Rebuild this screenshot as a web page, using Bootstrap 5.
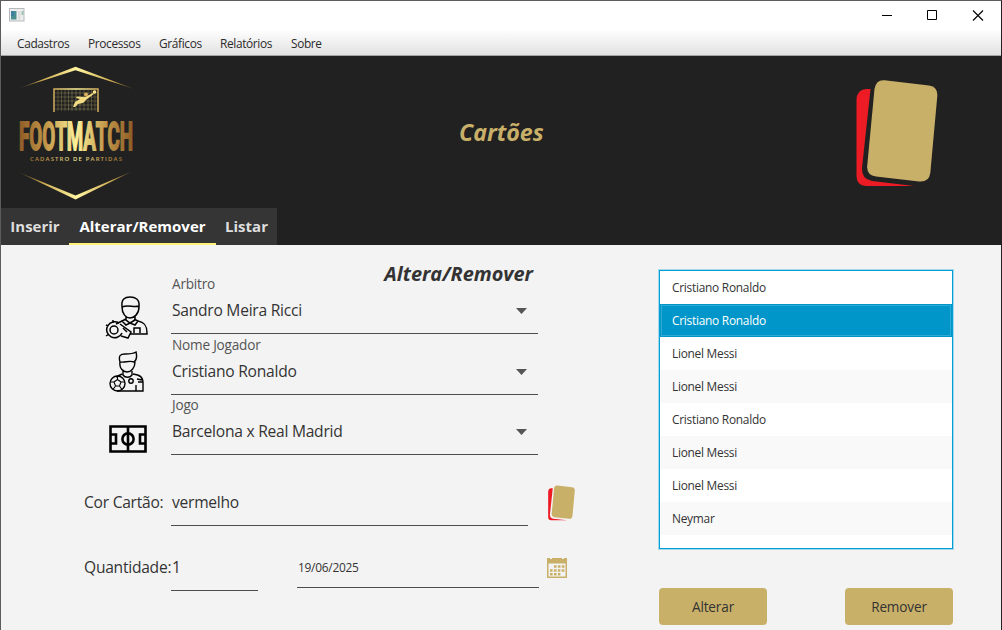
<!DOCTYPE html>
<html lang="pt-BR">
<head>
<meta charset="utf-8">
<title>Cartões</title>
<link href="https://cdn.jsdelivr.net/npm/bootstrap@5.3.0/dist/css/bootstrap.min.css" rel="stylesheet">
<style>
body{font-family:"Open Sans","Noto Sans",sans-serif;color:#333;background:#f3f3f3;overflow:hidden}
.app{width:1002px;height:630px;border:1px solid #5c5c5c;border-right-color:#222;border-bottom:0}
.titlebar{height:30px;background:#fff}
.menubar{height:25px;background:linear-gradient(#fdfdfd,#e1e1e1);border-bottom:1px solid #a3a3a3;font-size:11.9px;letter-spacing:-.36px;padding-left:16px;line-height:24px}
.menubar a{color:#2b2b2b;text-decoration:none;width:71px}
.menubar a.narrow{width:61px}
.hero{height:152px;background:#212121}
.hero h1{font-size:23.2px;font-weight:700;font-style:italic;color:#c9b069;width:84px;padding-top:2px;white-space:nowrap}
.tabstrip{height:37px;background:#212121;font-size:15px;font-weight:700}
.tabstrip a{background:#353535;color:#dedede;text-decoration:none;text-align:center;line-height:36px;height:37px;white-space:nowrap}
.tabstrip a.on{color:#fff;box-shadow:inset 0 -2px #fff27a}
.w-a{width:68px}.w-b{width:147px}.w-c{width:61px}
.formcol{width:658px;height:385px}
.side{width:170px;flex:none}
.side svg{display:block}
.fieldbox{width:367px}
.cap{font-size:13.6px;letter-spacing:-.2px;line-height:18px;color:#555;padding-left:1px}
.val{height:41px;line-height:34px;font-size:15.6px;letter-spacing:-.25px;border-bottom:1px solid #4d4d4d;padding-left:1px;white-space:nowrap}
.date-val{width:242px;height:38px;margin-left:39px;font-size:11.9px;letter-spacing:-.25px}
.subhead{font-size:19.9px;font-weight:700;font-style:italic;line-height:24px;margin:17px 5px 0 0}
.arrow{width:11px;height:6px;background:#555;clip-path:polygon(0 0,100% 0,50% 100%);margin:15px 11px 0 0}
.side-text{font-size:15.6px;letter-spacing:-.25px;line-height:34px;padding-left:83px;white-space:nowrap}
.players{width:294px;height:279px;margin-top:25px;background:#fff;border:1px solid #039ed3;box-shadow:0 0 0 1px #a5d8ea;font-size:11.9px;letter-spacing:-.26px}
.players li{height:33px;line-height:33px;padding-left:12px}
.players li:nth-child(even){background:#f9f9f9}
.players li.sel{background:#0096c9;color:#fff;box-shadow:inset 0 0 0 1px #0096c9,inset 0 0 0 2px #2faad5}
.gold{width:108px;height:37px;border:0;border-radius:4px;background:#c9b069;color:#333;font-size:13.6px;letter-spacing:-.15px;padding:2px 0 0}
.gold:hover{background:#c9b069}
</style>
</head>
<body>
<svg width="0" height="0" class="position-absolute">
  <symbol id="cards" viewBox="0 0 82 107">
    <path fill="#ed1c24" d="M14.5 9H10Q.5 10 .5 20V96Q.5 105.500 10 106H58L16 101Q5.500 99 6 88Z"/>
    <path fill="#c9b069" d="M28.500.3 73 5.500Q82 7 81.300 16L74.300 93Q73 102.500 63 101.500L20 96.500Q10.500 95 11.200 86L18.500 9Q20-.5 28.500.3Z"/>
  </symbol>
</svg>
<div class="app d-flex flex-column">
  <div class="titlebar d-flex justify-content-between">
    <svg width="16" height="14" class="ms-2" style="margin-top:7px" viewBox="0 0 16 14">
      <rect x=".5" y=".5" width="14.500" height="12.500" fill="#eee" stroke="#b5b9bd"/>
      <rect x="2" y="3" width="5.500" height="8.500" fill="#4a8f92"/><rect x="2" y="3" width="3" height="5" fill="#40809f"/>
      <rect x="9" y="3" width="2.500" height="8.500" fill="#dcdcdc"/><rect x="12.500" y="3" width="2" height="4" fill="#9cc3b4"/>
    </svg>
    <svg width="120" height="30" viewBox="0 0 120 30" fill="none" stroke="#000">
      <path d="M1 14.500h10M46.500 9.500h9v9h-9z"/><path d="m92 9.500 10 10m0-10-10 10" stroke-width="1.100"/>
    </svg>
  </div>
  <nav class="menubar d-flex">
    <a href="#">Cadastros</a><a href="#">Processos</a><a href="#" class="narrow">Gráficos</a><a href="#">Relatórios</a><a href="#">Sobre</a>
  </nav>
  <header class="hero d-flex justify-content-between">
    <svg width="150" height="152" viewBox="1 56 150 152" overflow="visible">
      <defs>
        <linearGradient id="g" gradientUnits="userSpaceOnUse" x1="19" x2="133" y1="0" y2="0"><stop offset="0" stop-color="#8f5c26"/><stop offset=".25" stop-color="#c59a4b"/><stop offset=".5" stop-color="#fdf39a"/><stop offset=".75" stop-color="#c59a4b"/><stop offset="1" stop-color="#8f5c26"/></linearGradient>
        <linearGradient id="e" gradientUnits="userSpaceOnUse" x1="19" x2="135" y1="0" y2="0"><stop offset="0" stop-color="#7a5c28" stop-opacity=".5"/><stop offset=".2" stop-color="#cda94f"/><stop offset=".5" stop-color="#fff5a0"/><stop offset=".8" stop-color="#cda94f"/><stop offset="1" stop-color="#7a5c28" stop-opacity=".5"/></linearGradient>
      </defs>
      <path fill="url(#e)" d="M20 88 75.500 66.700 135 89.300 75.500 70.300ZM18 172 75.500 195.500 133 171 75.500 199.500Z"/>
      <g fill="none" stroke="url(#g)">
        <path stroke-width="1.500" d="M54 112V89h44v23"/>
        <path stroke-width=".5" opacity=".5" d="M58 90v21M61.500 90v21M65 90v21M68.500 90v21M72 90v21M76 90v21M80 90v21M84 90v21M88 90v21M91.500 90v21M95 90v21M55 93h42M55 97h42M55 101h42M55 105h42M55 109h42"/>
      </g>
      <path fill="#f3dc83" d="m73 107 2-5 5-3-4-1 1-1.500 8 .5 8-4 1 1-7 5-4 4-5 1-3 3z"/>
      <circle cx="86" cy="94.500" r="2" fill="#d9af5b"/><circle cx="94.500" cy="92" r="1.800" fill="#ffe98e"/>
      <text x="19" y="150" font-family="Roboto" font-weight="700" font-size="39" textLength="114" lengthAdjust="spacingAndGlyphs" fill="url(#g)" stroke="url(#g)" stroke-width="1.800" style="font-kerning:none">FOOTMATCH</text>
      <text x="30" y="161" font-family="Open Sans" font-weight="600" font-size="6" textLength="92" lengthAdjust="spacing" fill="url(#g)">CADASTRO DE PARTIDAS</text>
    </svg>
    <h1 class="m-0 align-self-center" style="margin-left:74px!important">Cartões</h1>
    <svg width="82" height="107" style="margin:24px 63px 0 79px"><use href="#cards"/></svg>
  </header>
  <nav class="tabstrip d-flex"><a href="#" class="w-a">Inserir</a><a href="#" class="w-b on">Alterar/Remover</a><a href="#" class="w-c">Listar</a></nav>
  <main class="d-flex">
    <section class="formcol">
      <div class="d-flex" style="height:89px">
        <div class="side"><svg width="44" height="44" style="margin:50px 0 0 104px" viewBox="0 0 44 44" fill="none" stroke="#000" stroke-width="1.500">
          <path d="M17 12c-1-8 3-10 8-10s10 2 9 10c0 7-5 11-9 11s-8-4-8-11Zm0 0c7-3 11 1 17-1M21 21v4l4 3 5-3v-4M21 24l-4 2 4 4 4-2 5 2 3-4-4-2M17 26l-6 3M33 26c6 1 9 4 9 12v1H25M29 38v-5h6v5M15 29l11 8-3 6-7-2"/>
          <circle cx="9" cy="35" r="4"/><path d="M17 38a8 8 0 1 1-3-10M18 33l4 4M1 30l2 1M8 25v3M1 41l3-2"/>
        </svg></div>
        <div class="fieldbox">
          <div class="d-flex justify-content-between" style="height:48px"><div class="cap align-self-end">Arbitro</div><div class="subhead">Altera/Remover</div></div>
          <div class="val d-flex justify-content-between"><span>Sandro Meira Ricci</span><i class="arrow"></i></div>
        </div>
      </div>
      <div class="d-flex" style="margin-top:2px">
        <div class="side"><svg width="40" height="42" style="margin:15px 0 0 107px" viewBox="0 0 40 42" fill="none" stroke="#000" stroke-width="1.400">
          <path d="M12 11C10 4 13 3 17 3c4 0 8 0 11-2 1 4 1 8-2 10-5-2-9 1-14 0Zm0 0c-1 6 3 10 7 10s8-4 8-10M15 20v4c2 3 7 3 9 0v-4M14 23l-6 3M25 23c7 1 10 3 10 9v8H9M28 40v-6M29 28l5 1M30 31h5"/>
          <circle cx="23" cy="30" r="2.200"/><circle cx="9.500" cy="32.500" r="7.500"/><path d="m6 31 3.500-2.500L13 31l-1.500 4h-4ZM9.500 25v3.500M2 31h4M13 31h4M7.500 35 5 38.500M11.500 35l2.500 3.500" stroke-width="1.100"/>
        </svg></div>
        <div class="fieldbox"><div class="cap">Nome Jogador</div><div class="val d-flex justify-content-between"><span>Cristiano Ronaldo</span><i class="arrow"></i></div></div>
      </div>
      <div class="d-flex" style="margin-top:1px">
        <div class="side"><svg width="38" height="28" style="margin:29px 0 0 108px" viewBox="0 0 38 28" fill="none" stroke="#000" stroke-width="2.600">
          <path d="M1.500 1.500h35v25h-35ZM19 1v26M1 9.500h6v9H1M37 9.500h-6v9h6"/><circle cx="19" cy="14" r="5.600"/>
        </svg></div>
        <div class="fieldbox"><div class="cap">Jogo</div><div class="val d-flex justify-content-between"><span>Barcelona x Real Madrid</span><i class="arrow"></i></div></div>
      </div>
      <div class="d-flex" style="margin-top:30px">
        <div class="side side-text">Cor Cartão:</div>
        <div class="val" style="width:357px">vermelho</div>
        <svg width="27" height="36" style="margin-left:20px"><use href="#cards"/></svg>
      </div>
      <div class="d-flex" style="margin-top:24px">
        <div class="side side-text">Quantidade:</div>
        <div class="val" style="width:87px">1</div>
        <div class="val date-val">19/06/2025</div>
        <svg width="20" height="20" style="margin:8px 0 0 8px" viewBox="0 0 20 20">
          <path fill="#c9b069" d="M0 0h3v1h2V0h10v1h2V0h3v20H0Z"/><path fill="#f3f3f3" d="M1.500 5.500h17v13h-17Z"/>
          <path d="M7 8.500h11M3 12.500h15M3 16.300h11" stroke="#c9b069" stroke-width="2.500" stroke-dasharray="2.600 1.300"/>
        </svg>
      </div>
    </section>
    <section>
      <ul class="players list-unstyled mb-0">
        <li>Cristiano Ronaldo</li><li class="sel">Cristiano Ronaldo</li><li>Lionel Messi</li><li>Lionel Messi</li><li>Cristiano Ronaldo</li><li>Lionel Messi</li><li>Lionel Messi</li><li>Neymar</li>
      </ul>
      <div class="d-flex justify-content-between" style="margin-top:39px"><button class="btn gold">Alterar</button><button class="btn gold">Remover</button></div>
    </section>
  </main>
</div>
<script src="https://cdn.jsdelivr.net/npm/bootstrap@5.3.0/dist/js/bootstrap.bundle.min.js"></script>
</body>
</html>
